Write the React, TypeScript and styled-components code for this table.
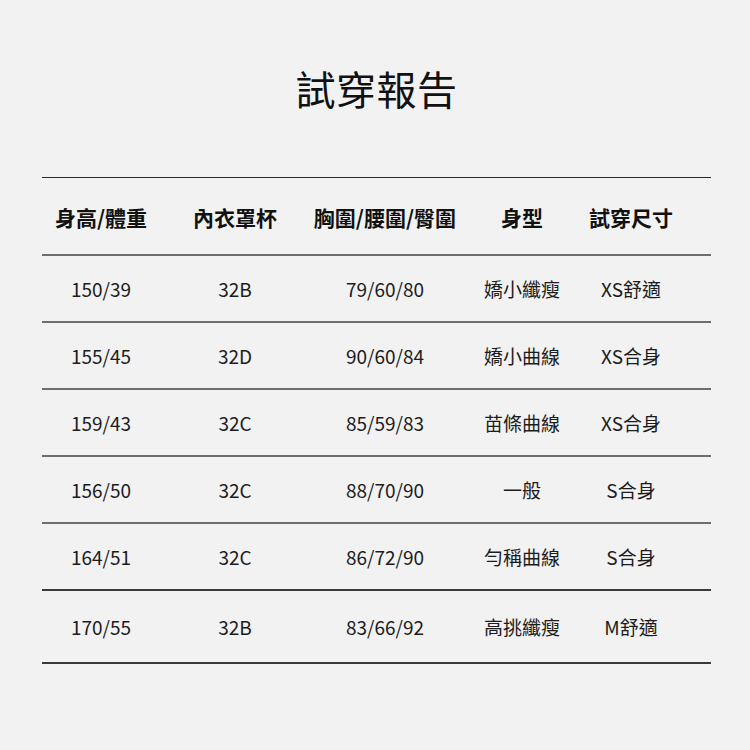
import styled, { createGlobalStyle } from "styled-components";

const GlobalStyle = createGlobalStyle`
  html, body {
    margin: 0;
    padding: 0;
    background: #f2f2f2;
  }
  body {
    font-family: "Noto Sans CJK TC", "Noto Sans", sans-serif;
    color: #1a1a1a;
  }
`;

const Page = styled.div`
  width: 750px;
  height: 750px;
  background: #f2f2f2;
  padding: 60px 39px 0 42px;
  box-sizing: border-box;
`;

const Title = styled.h1`
  margin: 0;
  height: 117px;
  font-size: 40px;
  font-weight: 400;
  line-height: 56px;
  text-align: center;
  letter-spacing: 0.5px;
  color: #111;
`;

const Table = styled.div`
  width: 669px;
  border-top: 1.5px solid #2a2a2a;
`;

const Row = styled.div<{ $height: number; $dark?: boolean }>`
  display: grid;
  grid-template-columns: 118px 150px 150px 124px 94px 1fr;
  align-items: center;
  height: ${(p) => p.$height}px;
  border-bottom: 2px solid ${(p) => (p.$dark ? "#3a3a3a" : "#6e6e6e")};
  box-sizing: border-box;
`;

const HeadCell = styled.div`
  text-align: center;
  font-size: 21px;
  font-weight: 700;
  color: #111;
  padding-top: 2px;
`;

const Cell = styled.div`
  text-align: center;
  font-size: 19px;
  font-weight: 400;
  color: #1c1c1c;
`;

const headers = ["身高/體重", "內衣罩杯", "胸圍/腰圍/臀圍", "身型", "試穿尺寸"];

const rows = [
  ["150/39", "32B", "79/60/80", "嬌小纖瘦", "XS舒適"],
  ["155/45", "32D", "90/60/84", "嬌小曲線", "XS合身"],
  ["159/43", "32C", "85/59/83", "苗條曲線", "XS合身"],
  ["156/50", "32C", "88/70/90", "一般", "S合身"],
  ["164/51", "32C", "86/72/90", "勻稱曲線", "S合身"],
  ["170/55", "32B", "83/66/92", "高挑纖瘦", "M舒適"],
];

export default function App() {
  return (
    <>
      <GlobalStyle />
      <Page>
        <Title>試穿報告</Title>
        <Table>
          <Row $height={78}>
            {headers.map((h) => (
              <HeadCell key={h}>{h}</HeadCell>
            ))}
            <div />
          </Row>
          {rows.map((r, i) => (
            <Row
              key={r[0]}
              $height={i === rows.length - 1 ? 73 : 67}
              $dark={i >= rows.length - 2}
            >
              {r.map((c, j) => (
                <Cell key={j}>{c}</Cell>
              ))}
              <div />
            </Row>
          ))}
        </Table>
      </Page>
    </>
  );
}
